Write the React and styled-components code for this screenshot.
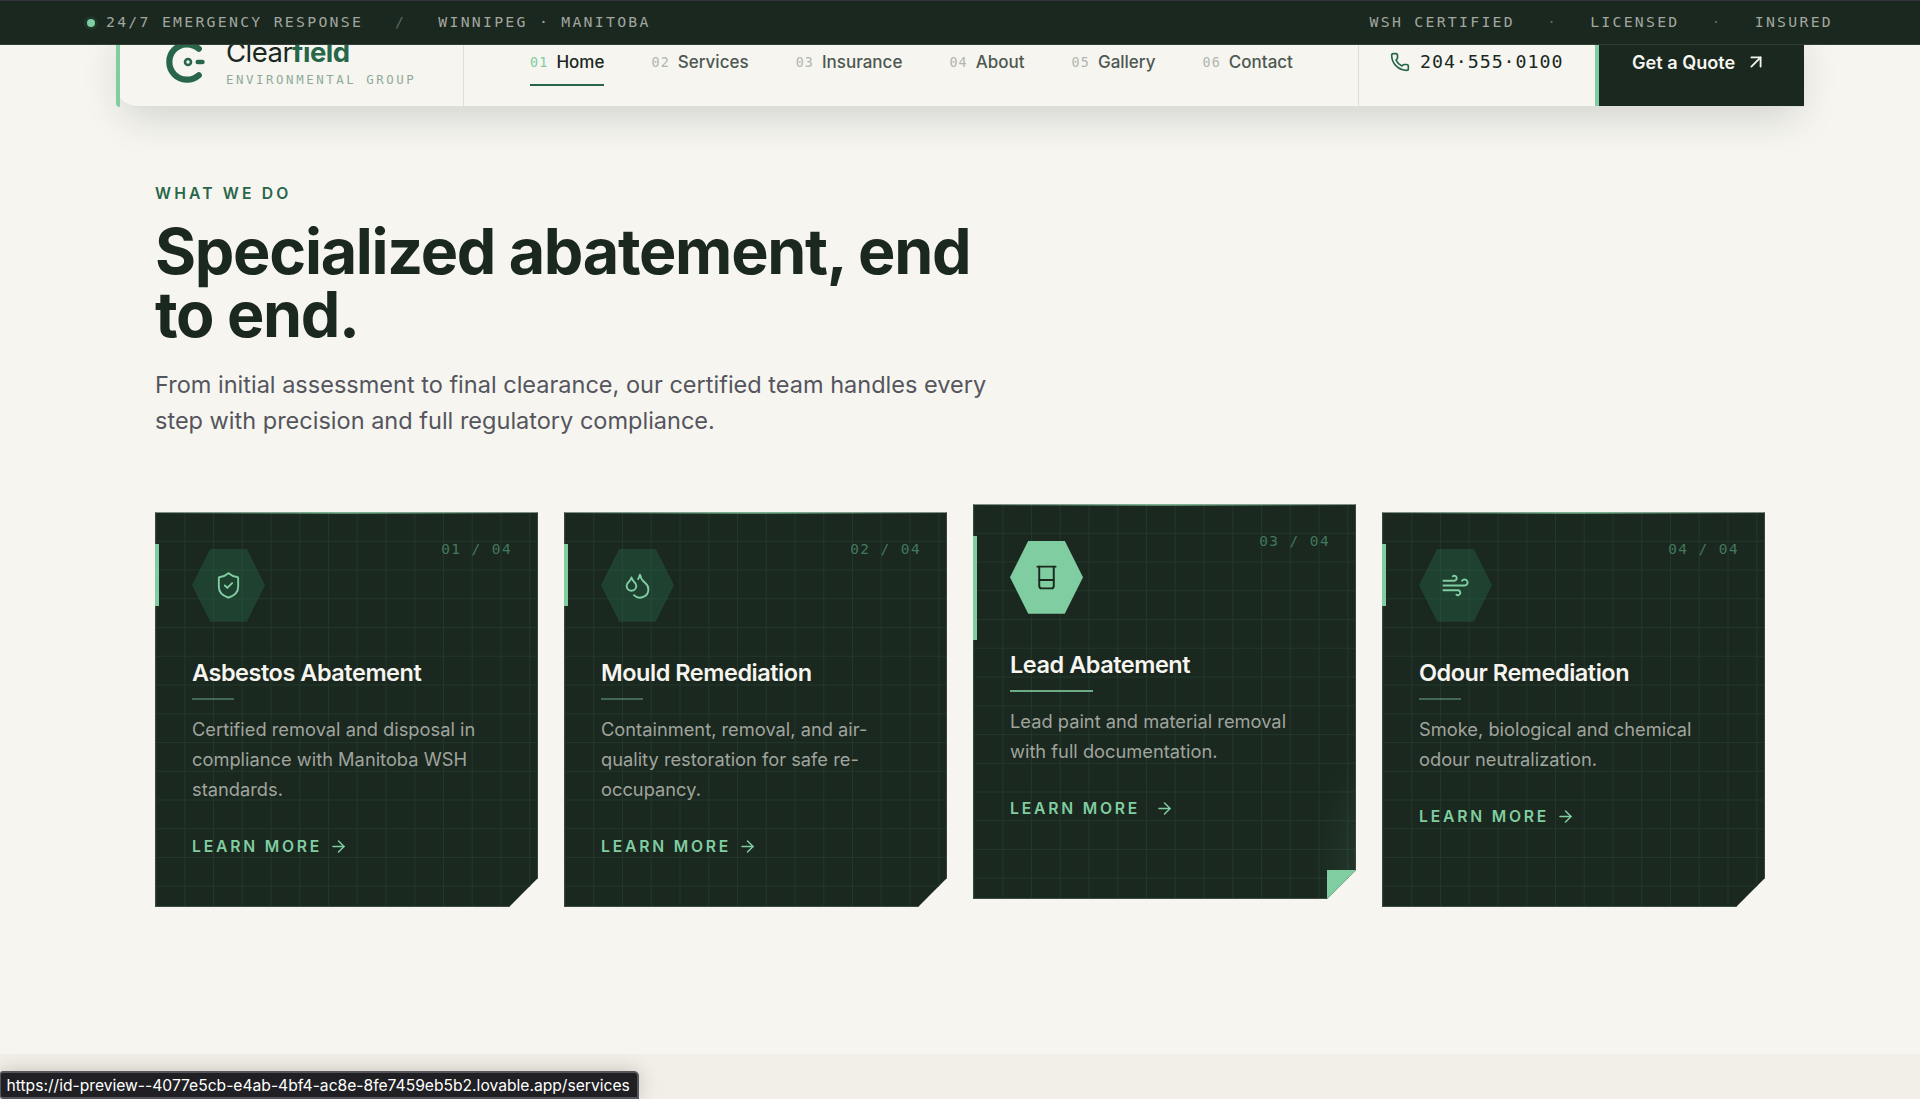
import React from 'react';
import styled, { createGlobalStyle } from 'styled-components';
import { ArrowRight, ArrowUpRight, Beaker, Droplets, Phone, ShieldCheck, Wind } from 'lucide-react';

const ink = '#1a281f';
const cream = '#f6f5f0';
const mint = '#80cda1';
const forest = '#28664a';

const navItems = ['Home', 'Services', 'Insurance', 'About', 'Gallery', 'Contact'];

const services = [
  { title: 'Asbestos Abatement', text: 'Certified removal and disposal in compliance with Manitoba WSH standards.', Icon: ShieldCheck },
  { title: 'Mould Remediation', text: 'Containment, removal, and air-quality restoration for safe re-occupancy.', Icon: Droplets },
  { title: 'Lead Abatement', text: 'Lead paint and material removal with full documentation.', Icon: Beaker, active: true },
  { title: 'Odour Remediation', text: 'Smoke, biological and chemical odour neutralization.', Icon: Wind },
];

function Mark() {
  return (
    <svg width="42" height="48" viewBox="0 0 42 48" fill="none">
      <path d="M32.8 10.8A17.7 17.7 0 1 0 32.8 37.2" stroke={forest} strokeWidth="6.2" strokeLinecap="round" />
      <circle cx="22" cy="24" r="3" stroke={forest} strokeWidth="2.6" />
      <path d="M31.8 24h4.6" stroke={forest} strokeWidth="4.6" strokeLinecap="round" />
    </svg>
  );
}

const App = () => {
  return (
    <Page>
      <GlobalStyle />
      <TopBar>
        <TopGroup>
          <Pulse />
          <span>24/7 EMERGENCY RESPONSE</span>
          <Divider>/</Divider>
          <span>WINNIPEG · MANITOBA</span>
        </TopGroup>
        <TopGroup>
          <span>WSH CERTIFIED</span>
          <Divider>·</Divider>
          <span>LICENSED</span>
          <Divider>·</Divider>
          <span>INSURED</span>
        </TopGroup>
      </TopBar>

      <Header>
        <Brand>
          <Mark />
          <div>
            <BrandName>Clear<b>field</b></BrandName>
            <BrandSub>ENVIRONMENTAL GROUP</BrandSub>
          </div>
        </Brand>
        <Nav>
          {navItems.map((item, index) => (
            <NavItem key={item} $active={index === 0}>
              <small>0{index + 1}</small>
              {item}
            </NavItem>
          ))}
        </Nav>
        <PhoneLink>
          <Phone size={20} color={forest} strokeWidth={2} />
          <span>204·555·0100</span>
        </PhoneLink>
        <Quote>
          Get a Quote
          <ArrowUpRight size={22} strokeWidth={2} />
        </Quote>
      </Header>

      <Section>
        <Eyebrow>WHAT WE DO</Eyebrow>
        <Heading>Specialized abatement, end to end.</Heading>
        <Lead>From initial assessment to final clearance, our certified team handles every step with precision and full regulatory compliance.</Lead>
        <Cards>
          {services.map(({ title, text, Icon, active }, index) => (
            <Card key={title} $active={active}>
              <Count>0{index + 1} / 04</Count>
              <Hex $active={active}>
                <Icon size={29} strokeWidth={1.6} />
              </Hex>
              <CardTitle>{title}</CardTitle>
              <Rule $active={active} />
              <CardText>{text}</CardText>
              <More $active={active}>
                LEARN MORE
                <ArrowRight size={19} strokeWidth={1.9} />
              </More>
              {active && <Fold />}
            </Card>
          ))}
        </Cards>
      </Section>

      <NextSection />
      <StatusUrl>https://id-preview--4077e5cb-e4ab-4bf4-ac8e-8fe7459eb5b2.lovable.app/services</StatusUrl>
    </Page>
  );
};

export default App;

const GlobalStyle = createGlobalStyle`
  * {
    box-sizing: border-box;
  }

  body {
    margin: 0;
    background: ${cream};
    font-family: Inter, 'Liberation Sans', sans-serif;
    overflow: hidden;
  }
`;

const mono = "'DejaVu Sans Mono', 'Liberation Mono', monospace";

const Page = styled.div`
  position: relative;
  display: flex;
  flex-direction: column;
  height: 1099px;
  overflow: hidden;
  background: ${cream};
`;

const TopBar = styled.div`
  position: relative;
  z-index: 2;
  flex: none;
  display: flex;
  justify-content: space-between;
  height: 45px;
  padding: 0 87px 0 86px;
  background: ${ink};
  border-top: 1px solid #35343b;
  border-bottom: 1px solid #303d35;
  color: #a3a69f;
  font: 14.8px/20px ${mono};
  letter-spacing: 2.27px;
`;

const TopGroup = styled.div`
  display: flex;
  align-items: center;
  padding-bottom: 1px;
  white-space: pre;
`;

const Pulse = styled.i`
  width: 8px;
  height: 8px;
  margin: 1px 11px 0 1px;
  border-radius: 50%;
  background: ${mint};
  box-shadow: 0 0 0 3px #1f3529;
`;

const Divider = styled.span`
  margin: 0 32px;
  color: #5d675f;
`;

const Header = styled.header`
  position: relative;
  flex: none;
  display: flex;
  height: 90px;
  margin: -28px 116px 0;
  padding-left: 4px;
  background: ${cream};
  border-bottom: 1px solid #dfdfda;
  border-bottom-left-radius: 21px;
  box-shadow: 0 16px 40px -8px rgba(26, 40, 32, 0.18);

  /* mint edge down the left side */
  &::before {
    content: '';
    position: absolute;
    top: 0;
    left: 0;
    bottom: -1px;
    width: 4px;
    border-bottom-left-radius: 4px;
    background: ${mint};
  }
`;

const Brand = styled.div`
  display: flex;
  align-items: center;
  gap: 18px;
  width: 344px;
  padding: 1px 0 0 46px;
  border-right: 1px solid #dfdfda;
`;

const BrandName = styled.div`
  color: ${ink};
  font-size: 27.5px;
  line-height: 34px;
  letter-spacing: -0.5px;

  b {
    color: ${forest};
    font-weight: 700;
  }
`;

const BrandSub = styled.div`
  padding-top: 1px;
  color: #8eab9a;
  font: 12.4px/20px ${mono};
  letter-spacing: 2.56px;
`;

const Nav = styled.nav`
  flex: 1;
  display: flex;
  justify-content: center;
  align-items: center;
  gap: 47px;
  padding: 1px 0 0 1px;
`;

const NavItem = styled.a`
  position: relative;
  display: flex;
  align-items: center;
  gap: 8px;
  color: ${({ $active }) => ($active ? ink : '#4d5852')};
  font-size: 17px;
  font-weight: 500;

  small {
    color: ${({ $active }) => ($active ? mint : '#b0b5ae')};
    font: 13.4px ${mono};
    letter-spacing: 1.1px;
  }

  &::after {
    content: '';
    position: absolute;
    left: 0;
    right: 0;
    bottom: -14px;
    height: 2.5px;
    background: ${({ $active }) => ($active ? forest : 'transparent')};
  }
`;

const PhoneLink = styled.a`
  display: flex;
  align-items: center;
  gap: 10px;
  width: 237px;
  padding: 1px 0 0 31px;
  border-left: 1px solid #dfdfda;
  color: ${ink};
  font: 18.3px ${mono};
  letter-spacing: 0.94px;

  span {
    padding-bottom: 2px;
  }
`;

const Quote = styled.a`
  display: flex;
  align-items: center;
  gap: 10px;
  width: 209px;
  padding: 1px 0 0 33px;
  background: ${ink};
  border-left: 4px solid ${mint};
  color: ${cream};
  font-size: 18.1px;
  font-weight: 600;
`;

const Section = styled.section`
  flex: none;
  height: 947px;
  padding: 77px 155px 0;
`;

const Eyebrow = styled.div`
  color: ${forest};
  font-size: 15.7px;
  line-height: 20px;
  font-weight: 600;
  letter-spacing: 3.15px;
`;

const Heading = styled.h1`
  width: 860px;
  margin: 16px 0 0;
  color: ${ink};
  font-size: 62.8px;
  line-height: 62.8px;
  font-weight: 700;
  letter-spacing: -1.29px;
`;

const Lead = styled.p`
  width: 860px;
  margin: 21px 0 0;
  color: #55555e;
  font-size: 23.52px;
  line-height: 36.6px;
`;

const Cards = styled.div`
  display: grid;
  grid-template-columns: repeat(4, 1fr);
  gap: 26px;
  margin-top: 72px;
`;

const Card = styled.article`
  position: relative;
  height: 395px;
  padding: 36px;
  transform: translateY(${({ $active }) => ($active ? '-8px' : '0')});
  background:
    radial-gradient(60px 120px at 104% 92%, ${({ $active }) => ($active ? 'rgba(128, 205, 161, 0.1)' : 'transparent')}, transparent),
    linear-gradient(90deg, #22372b 1px, transparent 1px) -0.5px 0 / 28.75px 28.75px,
    linear-gradient(#22372b 1px, transparent 1px) 0 -1px / 28.75px 28.75px,
    ${ink};
  border: 1px solid #36483d;
  border-top-color: #7d8b82;
  clip-path: polygon(0 0, 100% 0, 100% calc(100% - 28.7px), calc(100% - 28.7px) 100%, 0 100%);

  &::before {
    content: '';
    position: absolute;
    top: -1px;
    left: -1px;
    right: -1px;
    height: 2px;
    background: linear-gradient(90deg, transparent, ${mint}, transparent);
    opacity: 0.6;
  }

  &::after {
    content: '';
    position: absolute;
    top: 31px;
    left: -1px;
    width: 4px;
    height: ${({ $active }) => ($active ? '104px' : '62px')};
    background: ${mint};
  }
`;

const Count = styled.span`
  position: absolute;
  top: 26px;
  right: 25px;
  color: #42785d;
  font: 14.4px/20px ${mono};
  letter-spacing: 1.45px;
`;

const Hex = styled.div`
  display: flex;
  align-items: center;
  justify-content: center;
  width: 73px;
  height: 73px;
  clip-path: polygon(25% 0, 75% 0, 100% 50%, 75% 100%, 25% 100%, 0 50%);
  background: ${({ $active }) => ($active ? mint : 'rgba(40, 102, 74, 0.4)')};
  color: ${({ $active }) => ($active ? ink : mint)};
`;

const CardTitle = styled.h3`
  margin: 36px 0 0;
  color: ${cream};
  font-size: 23.5px;
  line-height: 30px;
  font-weight: 600;
  letter-spacing: -0.47px;
`;

const Rule = styled.div`
  width: ${({ $active }) => ($active ? '83px' : '42px')};
  height: 2px;
  margin-top: 10px;
  background: ${mint};
  opacity: ${({ $active }) => ($active ? 0.8 : 0.4)};
`;

const CardText = styled.p`
  width: 300px;
  margin: 15.5px 0 0;
  color: #a0a49e;
  font-size: 18.3px;
  line-height: 29.8px;
`;

const More = styled.a`
  display: flex;
  align-items: center;
  gap: ${({ $active }) => ($active ? '15px' : '6.5px')};
  margin-top: 31.5px;
  color: ${mint};
  font-size: 15.7px;
  line-height: 22px;
  font-weight: 600;
  letter-spacing: 2.8px;

  svg {
    margin-bottom: 1px;
  }
`;

const Fold = styled.i`
  position: absolute;
  right: -1px;
  bottom: -1px;
  width: 29px;
  height: 29px;
  background: ${mint};
`;

const NextSection = styled.section`
  flex: 1;
  background: #f2efe8;
`;

/* link target bubble in the window corner */
const StatusUrl = styled.div`
  position: absolute;
  left: 0;
  bottom: 0;
  width: 639px;
  height: 28px;
  padding-left: 5.5px;
  background: #202024;
  border: 2px solid #55555a;
  border-left-width: 1px;
  border-radius: 3px 5px 0 3px;
  box-shadow: 0 0 20px rgba(0, 0, 0, 0.2);
  color: #fff;
  font-size: 15.64px;
  line-height: 25px;
  white-space: nowrap;
`;
